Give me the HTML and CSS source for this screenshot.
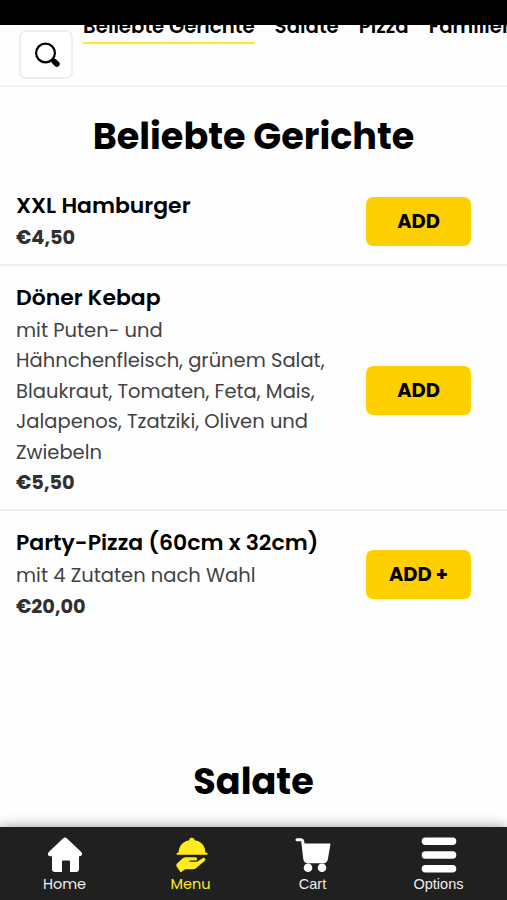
FILE: index.html
```html
<!DOCTYPE html>
<html lang="de">
<head>
    <meta charset="UTF-8">
    <title>Speisekarte</title>
    <link rel="stylesheet" href="styles.css">
</head>
<body>
<div class="app">
    <div class="statusbar"></div>
    <header class="header">
        <button class="search" aria-label="Suche">
            <svg viewBox="0 0 28 28" width="28" height="28">
                <circle cx="12.5" cy="12" r="9.4" fill="none" stroke="#000" stroke-width="2.2"/>
                <path d="M18.5 18.5l1.5 1.5" stroke="#000" stroke-width="3"/>
                <path d="M21.3 20.5l2.6 2.6" stroke="#000" stroke-width="5.6" stroke-linecap="round"/>
            </svg>
        </button>
        <nav class="tabs">
            <a class="tab current">Beliebte Gerichte</a>
            <a class="tab">Salate</a>
            <a class="tab">Pizza</a>
            <a class="tab">Familienpizza</a>
        </nav>
    </header>
    <main class="menu">
        <h2 class="title">Beliebte Gerichte</h2>
        <div class="dish">
            <div class="info">
                <h3 class="name">XXL Hamburger</h3>
                <p class="price">€4,50</p>
            </div>
            <button class="add">ADD</button>
        </div>
        <div class="dish">
            <div class="info">
                <h3 class="name">Döner Kebap</h3>
                <p class="desc">mit Puten- und<br>Hähnchenfleisch, grünem Salat,<br>Blaukraut, Tomaten, Feta, Mais,<br>Jalapenos, Tzatziki, Oliven und<br>Zwiebeln</p>
                <p class="price">€5,50</p>
            </div>
            <button class="add">ADD</button>
        </div>
        <div class="dish">
            <div class="info">
                <h3 class="name">Party-Pizza (60cm x 32cm)</h3>
                <p class="desc">mit 4 Zutaten nach Wahl</p>
                <p class="price">€20,00</p>
            </div>
            <button class="add">ADD +</button>
        </div>
        <h2 class="title title-next">Salate</h2>
    </main>
    <nav class="bottom">
        <a class="item">
            <svg viewBox="0 0 36 36" width="36" height="36" fill="#fff">
                <path d="M16.2 1.2q1.8-1.4 3.6 0L34.2 15q1.6 1.8.3 3.5-.6.7-1.8.7H32V32q0 3-3 3h-6V24.5q0-1-1-1h-6q-1 0-1 1V35H8q-3 0-3-3V19.200H3.300q-1.300 0-1.900-.8-1.200-1.600.4-3.300z"/>
            </svg>
            <span>Home</span>
        </a>
        <a class="item item-menu active">
            <svg viewBox="0 0 36 36" width="36" height="36" fill="#ffeb1f">
                <path d="M16.500 3.300C15.300 .1 22 -.4 21.500 3.300C29 4.500 32.200 9.500 32.500 15.800H33.700q1 0 1 1t-1 1H4.500q-1 0-1-1t1-1H5.500C5.800 9.500 9.500 4.500 16.500 3.300z"/>
                <path d="M4 26.500l5.800-5.300q1.200-.9 3-.9h9.700q1.700 0 1.700 1.600T22.500 23.500h-6v1.300H24l5.500-3.600q1.400-.9 2.500.2 1 1.200-.2 2.400L23.300 31q-1.500 1.200-3.300 1.200H12L8.500 35q-.8.500-1.300-.3L3.300 29q-.4-1.500.7-2.500z"/>
            </svg>
            <span>Menu</span>
        </a>
        <a class="item item-cart">
            <svg viewBox="0 0 36 36" width="36" height="36" fill="#fff">
                <path d="M2 2.800h4.200q1.200 0 1.500 1.500L9.800 22q.5 2.700 3 2.700h16.500" fill="none" stroke="#fff" stroke-width="3" stroke-linecap="round" stroke-linejoin="round"/>
                <path d="M8 6.600h26.700q.9 0 .7 1L32.800 22.500q-.5 2.900-2.800 2.900H12q-2 0-2.400-2z"/>
                <circle cx="13" cy="30.800" r="4.300"/>
                <circle cx="27" cy="30.800" r="4.300"/>
            </svg>
            <span>Cart</span>
        </a>
        <a class="item item-options">
            <svg viewBox="0 0 36 36" width="36" height="36" fill="#fff">
                <rect x=".7" y=".5" width="34.600" height="7.500" rx="3.700"/>
                <rect x=".7" y="14.300" width="34.600" height="7.500" rx="3.700"/>
                <rect x=".7" y="28" width="34.600" height="7.500" rx="3.700"/>
            </svg>
            <span>Options</span>
        </a>
    </nav>
</div>
</body>
</html>
```
FILE: styles.css
```css
*{
    box-sizing: border-box;
    margin: 0;
    padding: 0;
}
body{
    background: #fefefe;
    font-family: Poppins, Inter, sans-serif;
    color: #000;
}
button{
    font-family: inherit;
    border: none;
}
.app{
    display: flex;
    flex-direction: column;
    height: 900px;
    overflow: hidden;
}
.statusbar{
    flex: none;
    height: 25px;
    background: #000;
}
.header{
    flex: none;
    display: flex;
    align-items: flex-start;
    height: 62px;
    padding: 5px 0 0 19px;
    border-bottom: 2px solid #f2f2f2;
    overflow: hidden;
}
.search{
    flex: none;
    width: 54px;
    height: 49px;
    border: 2px solid #eee;
    border-radius: 7px;
    background: #fff;
    display: flex;
    align-items: center;
    justify-content: center;
}
.search svg{
    margin-left: 1px;
}
.tabs{
    display: flex;
    gap: 20px;
    margin: -18px 0 0 10px;
    white-space: nowrap;
}
.tab{
    height: 32px;
    line-height: 28px;
    font-size: 19.75px;
    font-weight: 600;
}
.current{
    border-bottom: 2px solid #ffe920;
}
.menu{
    flex: 1;
    min-height: 0;
    overflow: hidden;
}
.title{
    height: 86.8px;
    padding-top: 22px;
    line-height: 56px;
    font-size: 36.6px;
    font-weight: 700;
    text-align: center;
}
.title-next{
    margin-top: 99.6px;
}
.dish{
    display: flex;
    align-items: center;
    justify-content: space-between;
    padding: 15px 36px 10.5px 16px;
    border-bottom: 2px solid #efefef;
}
.dish:nth-of-type(3){
    border-bottom: none;
}
.info{
    white-space: nowrap;
}
.name{
    margin-bottom: 1.6px;
    line-height: 33px;
    font-size: 21.95px;
    font-weight: 600;
}
.desc, .price{
    line-height: 30.5px;
    font-size: 19.5px;
    color: #424242;
}
.price{
    font-weight: 700;
    font-size: 19.3px;
    color: #303030;
}
.add{
    width: 105px;
    height: 49px;
    border-radius: 7px;
    background: #ffd000;
    font-size: 19.5px;
    font-weight: 700;
    color: #000;
}
.bottom{
    flex: none;
    position: relative;
    display: flex;
    justify-content: space-between;
    height: 73px;
    padding: 10px 5px 0 2px;
    background: #202020;
    box-shadow: 0 0 12px rgba(0,0,0,.4);
}
.item{
    width: 125px;
    display: flex;
    flex-direction: column;
    align-items: center;
    font-size: 14.5px;
    line-height: 23px;
    color: #eee;
}
.item-menu{
    padding-left: 2px;
}
.item-cart{
    padding-right: 4px;
}
.item-options{
    padding-right: 2px;
}
.item-cart, .item-options{
    font-family: "Liberation Sans", sans-serif;
}
.active{
    color: #ffeb1f;
}
```
